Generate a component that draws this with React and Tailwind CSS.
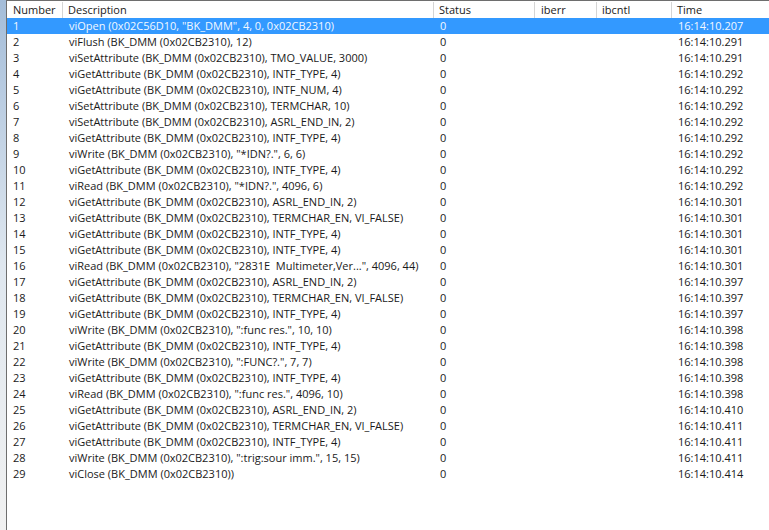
import React from "react";

const rows = [
  ["viOpen (0x02C56D10, \"BK_DMM\", 4, 0, 0x02CB2310)", "16:14:10.207"],
  ["viFlush (BK_DMM (0x02CB2310), 12)", "16:14:10.291"],
  ["viSetAttribute (BK_DMM (0x02CB2310), TMO_VALUE, 3000)", "16:14:10.291"],
  ["viGetAttribute (BK_DMM (0x02CB2310), INTF_TYPE, 4)", "16:14:10.292"],
  ["viGetAttribute (BK_DMM (0x02CB2310), INTF_NUM, 4)", "16:14:10.292"],
  ["viSetAttribute (BK_DMM (0x02CB2310), TERMCHAR, 10)", "16:14:10.292"],
  ["viSetAttribute (BK_DMM (0x02CB2310), ASRL_END_IN, 2)", "16:14:10.292"],
  ["viGetAttribute (BK_DMM (0x02CB2310), INTF_TYPE, 4)", "16:14:10.292"],
  ["viWrite (BK_DMM (0x02CB2310), \"*IDN?.\", 6, 6)", "16:14:10.292"],
  ["viGetAttribute (BK_DMM (0x02CB2310), INTF_TYPE, 4)", "16:14:10.292"],
  ["viRead (BK_DMM (0x02CB2310), \"*IDN?.\", 4096, 6)", "16:14:10.292"],
  ["viGetAttribute (BK_DMM (0x02CB2310), ASRL_END_IN, 2)", "16:14:10.301"],
  ["viGetAttribute (BK_DMM (0x02CB2310), TERMCHAR_EN, VI_FALSE)", "16:14:10.301"],
  ["viGetAttribute (BK_DMM (0x02CB2310), INTF_TYPE, 4)", "16:14:10.301"],
  ["viGetAttribute (BK_DMM (0x02CB2310), INTF_TYPE, 4)", "16:14:10.301"],
  ["viRead (BK_DMM (0x02CB2310), \"2831E  Multimeter,Ver...\", 4096, 44)", "16:14:10.301"],
  ["viGetAttribute (BK_DMM (0x02CB2310), ASRL_END_IN, 2)", "16:14:10.397"],
  ["viGetAttribute (BK_DMM (0x02CB2310), TERMCHAR_EN, VI_FALSE)", "16:14:10.397"],
  ["viGetAttribute (BK_DMM (0x02CB2310), INTF_TYPE, 4)", "16:14:10.397"],
  ["viWrite (BK_DMM (0x02CB2310), \":func res.\", 10, 10)", "16:14:10.398"],
  ["viGetAttribute (BK_DMM (0x02CB2310), INTF_TYPE, 4)", "16:14:10.398"],
  ["viWrite (BK_DMM (0x02CB2310), \":FUNC?.\", 7, 7)", "16:14:10.398"],
  ["viGetAttribute (BK_DMM (0x02CB2310), INTF_TYPE, 4)", "16:14:10.398"],
  ["viRead (BK_DMM (0x02CB2310), \":func res.\", 4096, 10)", "16:14:10.398"],
  ["viGetAttribute (BK_DMM (0x02CB2310), ASRL_END_IN, 2)", "16:14:10.410"],
  ["viGetAttribute (BK_DMM (0x02CB2310), TERMCHAR_EN, VI_FALSE)", "16:14:10.411"],
  ["viGetAttribute (BK_DMM (0x02CB2310), INTF_TYPE, 4)", "16:14:10.411"],
  ["viWrite (BK_DMM (0x02CB2310), \":trig:sour imm.\", 15, 15)", "16:14:10.411"],
  ["viClose (BK_DMM (0x02CB2310))", "16:14:10.414"],
];

function Row({ n, desc, time, selected }) {
  return (
    <div
      className={`flex h-[16px] items-center whitespace-pre ${
        selected ? "bg-[#3399ff] text-[#f2f8ff]" : "text-[#1a1a1a]"
      }`}
    >
      <div className="w-[56px] shrink-0 pl-[6px]">{n}</div>
      <div className="w-[371px] shrink-0 pl-[6px] overflow-hidden">{desc}</div>
      <div className="w-[101px] shrink-0 pl-[6px]">0</div>
      <div className="w-[62px] shrink-0"></div>
      <div className="w-[75px] shrink-0"></div>
      <div className="flex-1 pl-[6px]">{time}</div>
    </div>
  );
}

export default function App() {
  return (
    <div
      className="flex h-[530px] w-[769px] overflow-hidden bg-white text-[11px] leading-[16px]"
      style={{ fontFamily: '"Open Sans", "Noto Sans", sans-serif' }}
    >
      <div className="w-[6px] shrink-0 bg-gradient-to-b from-[#a4bdd9] via-[#dfe7ef] to-[#f1f1f1]"></div>
      <div className="flex flex-1 flex-col border-l border-t border-[#6e6e6e]">
        <div className="flex h-[17px] items-center whitespace-pre bg-white text-[#1a1a1a]">
          <div className="w-[56px] shrink-0 pl-[6px] border-r border-[#d5d5d5]">Number</div>
          <div className="w-[371px] shrink-0 pl-[5px] border-r border-[#d5d5d5]">Description</div>
          <div className="w-[101px] shrink-0 pl-[5px] border-r border-[#d5d5d5]">Status</div>
          <div className="w-[62px] shrink-0 pl-[6px] border-r border-[#d5d5d5]">iberr</div>
          <div className="w-[75px] shrink-0 pl-[5px] border-r border-[#d5d5d5]">ibcntl</div>
          <div className="flex-1 pl-[5px]">Time</div>
        </div>
        {rows.map((r, i) => (
          <Row key={i} n={i + 1} desc={r[0]} time={r[1]} selected={i === 0} />
        ))}
      </div>
    </div>
  );
}
